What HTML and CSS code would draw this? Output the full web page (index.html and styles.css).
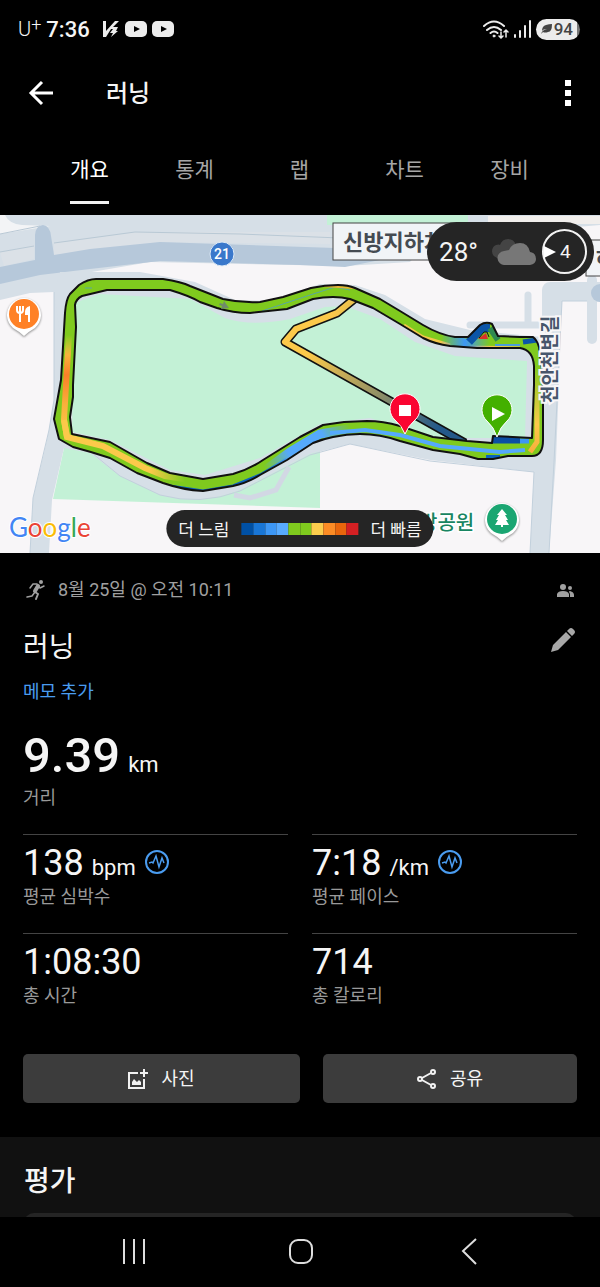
FILE: index.html
```
<!DOCTYPE html>
<html lang="ko">
<head>
    <meta charset="UTF-8">
    <meta name="viewport" content="width=device-width, initial-scale=1.0">
    <title>러닝</title>
    <link rel="stylesheet" href="styles.css">
</head>
<body>
<div class="app">

  <div class="status-bar">
    <div class="status-left">
      <span class="carrier">U<sup>+</sup></span>
      <span class="clock">7:36</span>
      <svg width="18" height="18" viewBox="0 0 18 18" fill="#ececec"><path d="M1 1h3v10L13 1h4l-6 6h5l-2 4h2l-7 6 2-4H8l3-4H9l-5 8H1z"/></svg>
      <svg width="22" height="16" viewBox="0 0 22 16"><rect width="22" height="16" rx="5" fill="#ececec"/><path d="M9 5l6 3-6 3z" fill="#000"/></svg>
      <svg width="22" height="16" viewBox="0 0 22 16"><rect width="22" height="16" rx="5" fill="#ececec"/><path d="M9 5l6 3-6 3z" fill="#000"/></svg>
    </div>
    <div class="status-right">
      <svg width="26" height="20" viewBox="0 0 26 20" fill="none" stroke="#ececec" stroke-width="2" stroke-linecap="round">
        <path d="M1 7q10-9 20 0M4 11q7-6 14 0M7.500 14q3.500-3 7 0"/>
        <circle cx="11" cy="17" r="1" fill="#ececec" stroke-width="1"/>
        <path d="M18 13v6m-2-2l2 2 2-2M23 18v-7m-2 2l2-2 2 2" stroke-width="1.500"/>
      </svg>
      <svg width="17" height="18" viewBox="0 0 17 18" stroke="#ececec" stroke-width="2" stroke-linecap="round"><path d="M1 15v2M6 11v6M11 6v11M16 1v16"/></svg>
      <span class="battery">
        <svg width="11" height="10" viewBox="0 0 11 10"><path d="M0 10Q1 6 6 5 2 5 1 7 1 2 5 1 8 0 11 0 11 8 7 8 4 9 2 8z" fill="#444"/></svg>94
      </span>
    </div>
  </div>

  <header class="top-bar">
    <button class="icon-button" aria-label="뒤로">
      <svg width="26" height="26" viewBox="0 0 26 26" fill="none" stroke="#fff" stroke-width="3"><path d="M25 13H3M14 2L3 13l11 11"/></svg>
    </button>
    <h1>러닝</h1>
    <button class="icon-button more" aria-label="더보기"><i></i><i></i><i></i></button>
  </header>

  <nav class="tabs">
    <a href="#overview" class="active">개요</a>
    <a href="#stats">통계</a>
    <a href="#laps">랩</a>
    <a href="#charts">차트</a>
    <a href="#gear">장비</a>
  </nav>

  <main>
    <div class="map">
      <svg class="map-canvas" viewBox="0 215 600 338" preserveAspectRatio="xMidYMid slice">
        <defs>
          <linearGradient id="spur" gradientUnits="userSpaceOnUse" x1="310" y1="350" x2="440" y2="425">
            <stop offset="0" stop-color="#fcc94a"/><stop offset=".55" stop-color="#8f8f66"/><stop offset="1" stop-color="#24598a"/>
          </linearGradient>
          <linearGradient id="west" gradientUnits="userSpaceOnUse" x1="0" y1="335" x2="0" y2="435">
            <stop offset="0" stop-color="#fcc94a" stop-opacity="0"/><stop offset=".2" stop-color="#f9b13c"/><stop offset=".4" stop-color="#fc7f28"/><stop offset=".7" stop-color="#f9b13c"/><stop offset="1" stop-color="#fcc94a"/>
          </linearGradient>
          <linearGradient id="south" gradientUnits="userSpaceOnUse" x1="150" y1="0" x2="185" y2="0">
            <stop offset="0" stop-color="#fcc94a"/><stop offset="1" stop-color="#fcc94a" stop-opacity="0"/>
          </linearGradient>
          <linearGradient id="east" gradientUnits="userSpaceOnUse" x1="0" y1="365" x2="0" y2="450">
            <stop offset="0" stop-color="#fcc94a" stop-opacity="0"/><stop offset=".7" stop-color="#fcc94a"/><stop offset="1" stop-color="#f9b13c"/>
          </linearGradient>
          <linearGradient id="cool" gradientUnits="userSpaceOnUse" x1="265" y1="470" x2="350" y2="425">
            <stop offset="0" stop-color="#55a9fc" stop-opacity="0"/><stop offset=".3" stop-color="#55a9fc"/><stop offset=".7" stop-color="#55a9fc"/><stop offset="1" stop-color="#55a9fc" stop-opacity="0"/>
          </linearGradient>
          <linearGradient id="north" gradientUnits="userSpaceOnUse" x1="440" y1="0" x2="490" y2="0">
            <stop offset="0" stop-color="#3d97f5" stop-opacity="0"/><stop offset=".5" stop-color="#3d97f5"/><stop offset="1" stop-color="#3d97f5" stop-opacity="0"/>
          </linearGradient>
          <path id="track" d="M61 380L65 313Q66 299 70 294L79 285Q88 279 96 279L163 279Q182 282 190 286L223 299Q241 303 260 302L283 297 311 288Q325 285 338 285 348 285 355 288L380 299 400 311 423 325Q440 335 455 337L468 337 480 325Q486 321 492 324L498 336 520 337 533 337Q537 340 539 347L542 370 543 400 543 440Q543 456 532 456L508 456 493 459 478 459 460 454 433 450 400 441Q380 434 360 434 347 434 333 437 323 439 313 443L287 460 260 475Q247 483 233 486L203 491Q183 490 163 483L137 473 110 458Q92 452 73 447L59 439 54 419z
            M73 385L76 327 75 305Q76 299 82 296L107 290 170 290Q190 296 200 302L217 308Q233 313 250 313L287 309 313 299Q323 297 333 297 342 297 350 299L373 308 400 324 423 338Q435 344 450 346L477 348 520 348Q533 350 534 366L534 385 532 438 493 436 492 443 467 441 433 437 400 426Q383 421 367 421L344 422 323 425 300 437 263 460Q250 469 233 474L203 479 170 473 147 463 110 442 72 434 70 417 73 397z"/>
          <clipPath id="track-clip"><use href="#track" clip-rule="evenodd"/></clipPath>
        </defs>

        <!-- ground, roads and river -->
        <rect y="215" width="600" height="338" fill="#f8f6f8"/>
        <path d="M0 215H600V225L430 240 410 262 345 266 150 262 80 274 58 292H54L30 293 0 300z" fill="#d6dfe7"/>
        <path d="M0 215H5Q9 224 22 225L50 226 0 234z" fill="#f3f4f6"/>
        <path d="M0 252L34 245V259L4 266zM54 243L135 232H330V244L160 242 54 255z" fill="#dbe1e7"/>
        <path d="M0 234L40 226M54 243L135 232 240 234 340 238M0 252L34 246" fill="none" stroke="#b9c9d5"/>
        <path d="M0 267L35 260V235Q36 225 43 225 50 226 51 236L54 255 90 249 160 242 335 248 430 250 345 267 300 265 160 261 90 269 40 275 0 284z" fill="#b6c8da"/>
        <path d="M327 215H468V225H327zM64 448L74 436 100 440 200 470 320 440V508L53 499z" fill="#c3f1d6"/>
        <path d="M468 216h20v15h-20z" fill="#d6dfe7"/>
        <path d="M488 216h112v8H488z" fill="#f1eeec"/>
        <path d="M54 292V400L49 430 44 453 33 498 30 553H49L52 500 64 448 70 440 80 290z" fill="#d6dfe7"/>
        <path d="M542 290Q543 282 550 282H600V301H562L556 460 549 553H530L534 472 430 460 350 444 310 454 240 490Q200 506 160 495L120 476 90 453 64 448 74 432 54 292 60 272 140 272 195 282 235 300 270 301 320 284 355 285 385 295 425 319 470 330 542 337z" fill="#d6dfe7"/>
        <path d="M534 472L430 461 350 444 310 455 240 491Q200 506 160 495L120 476 92 453M30 553L33 498 49 430 54 400V292M530 553L534 472M549 553L554 462 562 301H600" fill="none" stroke="#c2d0dc"/>
        <path d="M470 325H545M528 295V325" fill="none" stroke="#d6dfe7" stroke-width="7" stroke-linecap="round"/>
        <path d="M592 280V339" stroke="#d6dfe7" stroke-width="10" stroke-linecap="round"/>
        <circle cx="600" cy="293" r="9" fill="#b6c8da"/>
        <path d="M234 495L250 498 276 490 289 467" fill="none" stroke="#d2d8e4" stroke-width="5"/>
        <path d="M74 303L100 294 190 299 225 318Q250 327 290 319L325 307 345 306 380 319 415 342 455 356 527 361 525 438 430 438 370 418 320 424 260 458 205 475 170 470 110 440 72 432z" fill="#c3f1d6"/>
        <g class="map-text">
          <rect x="333" y="223" width="150" height="37" fill="#f1f4f7" stroke="#444"/>
          <text x="343" y="250" font-size="22" font-weight="700" fill="#454b52">신방지하차</text>
          <rect x="586" y="240" width="30" height="36" fill="#f1f4f7" stroke="#444"/>
          <text x="596" y="266" font-size="20" font-weight="700" fill="#454b52">하</text>
        </g>
        <circle cx="222" cy="254" r="12" fill="#3a78cb" stroke="#dce9f6"/>
        <text x="222" y="259" font-size="14" font-weight="500" fill="#fff" text-anchor="middle">21</text>

        <!-- shortcut across the park -->
        <path d="M358 296L337 313 296 329 285 342 465 443" fill="none" stroke="#111" stroke-width="9" stroke-linejoin="round"/>
        <path d="M358 296L337 313 296 329 285 342 465 443" fill="none" stroke="url(#spur)" stroke-width="6" stroke-linejoin="round"/>

        <!-- the lap, coloured by pace -->
        <use href="#track" fill="#7fca1e" fill-rule="evenodd"/>
        <g clip-path="url(#track-clip)" fill="none">
          <path d="M69 335L66 385 64 420 67 437" stroke="url(#west)" stroke-width="6"/>
          <path d="M64 420L67 437 103 446 145 468 165 476 190 480" stroke="url(#south)" stroke-width="6"/>
          <path d="M163 485L203 491 233 486 260 475 287 459" stroke="#0b63bd" stroke-width="3"/>
          <path d="M260 474L290 452 320 434 360 427" stroke="url(#cool)" stroke-width="9"/>
          <path d="M330 433L365 430 400 435 440 446 500 452 525 450" stroke="#55a9fc" stroke-width="4"/>
          <path d="M262 311L310 295 335 287 350 290M85 288h7" stroke="#5aa7a0" stroke-width="1"/>
          <path d="M323 286L355 288M373 295L382 300" stroke="#e8b337" stroke-width="2"/>
          <path d="M404 325L423 337 450 345M470 347L520 348" stroke="#f3c64a" stroke-width="3"/>
          <path d="M442 339L467 344 490 343" stroke="url(#north)" stroke-width="10"/>
          <path d="M469 342L482 328H490" stroke="#0b55a8" stroke-width="8"/>
          <path d="M490 328L498 340" stroke="#2f8a50" stroke-width="6"/>
          <path d="M495 345H520" stroke="#4a9cda" stroke-width="2"/>
          <path d="M523 342L537 340" stroke="#0b55a8" stroke-width="5"/>
          <path d="M537 365V442L530 452" stroke="url(#east)" stroke-width="5"/>
          <path d="M493 440H520" stroke="#0b4fa3" stroke-width="7"/>
          <path d="M520 441H529" stroke="#3d97f5" stroke-width="5"/>
          <path d="M486 457H500" stroke="#0b63bd" stroke-width="4"/>
        </g>
        <path d="M478 339L486 333 488 339z" fill="#d9312a"/>
        <path d="M479 338L484 332H487L489 337" fill="none" stroke="#111"/>
        <use href="#track" class="track-line"/>
        <path d="M220 303l3 1 1-3 5 7-8 1 1-3-3-1z" fill="#6f8b69"/>

        <text class="map-text street" transform="translate(557 403) rotate(-90)" font-size="19" font-weight="700">천안천변길</text>

        <!-- start and finish -->
        <path d="M497 437Q494 427 487 421A15 15 0 1 1 507 421Q500 427 497 437z" fill="#43b000" stroke="#fff"/>
        <path d="M492 407l13 7-13 7z" fill="#fff"/>
        <path d="M405 434Q402 426 395 420A15 15 0 1 1 415 420Q408 426 405 434z" fill="#fa0531" stroke="#fff"/>
        <path d="M399 405h12v11h-12z" fill="#fff"/>

        <!-- places -->
        <g class="place">
          <path d="M24 336Q20 332 13 328A17 17 0 1 1 35 328Q28 332 24 336z" fill="#fff"/>
          <circle cx="24" cy="314" r="15" fill="#ff8126"/>
          <path d="M17 306v4q0 3 3 3t3-3v-4M20 306v16" fill="none" stroke="#fff" stroke-width="2"/>
          <path d="M30 306v16h-2v-7h-3q-1-8 5-9z" fill="#fff"/>
        </g>
        <text class="map-text park" x="419" y="530" font-size="20" font-weight="500">방공원</text>
        <g class="place">
          <path d="M502 541Q498 537 491 533A17 17 0 1 1 513 533Q506 537 502 541z" fill="#fff"/>
          <circle cx="502" cy="519" r="15" fill="#1ba672"/>
          <path d="M502 509l5 6h-2l3 5h-2l3 5h-6v2h-2v-2h-6l3-5h-2l3-5h-2z" fill="#fff"/>
        </g>
        <text class="google" x="9" y="537"><tspan fill="#4285f4">G</tspan><tspan fill="#ea4335">o</tspan><tspan fill="#fbbc05">o</tspan><tspan fill="#4285f4">g</tspan><tspan fill="#34a853">l</tspan><tspan fill="#ea4335">e</tspan></text>
      </svg>

      <div class="weather">
        <span>28°</span>
        <svg width="46" height="26" viewBox="0 0 46 26">
          <path d="M7 19a7 7 0 0 1-1-13Q9 5 10 6 12 0 18 0q6 0 8 6l-6 13z" fill="#444"/>
          <path d="M15 26a7 7 0 0 1-1-14l5-1q3-7 11-7 8 0 10 9 6 1 6 7 0 5-6 6z" fill="#777"/>
        </svg>
        <div class="wind"><svg width="12" height="12" viewBox="0 0 12 12"><path d="M0 0l12 6-12 6z" fill="#fff"/></svg>4</div>
      </div>

      <div class="legend">
        <span>더 느림</span>
        <div class="scale"><i class="c1"></i><i class="c2"></i><i class="c3"></i><i class="c4"></i><i class="c5"></i><i class="c5"></i><i class="c6"></i><i class="c7"></i><i class="c8"></i><i class="c9"></i></div>
        <span>더 빠름</span>
      </div>
    </div>

    <section class="activity" id="overview">
      <div class="meta">
        <svg width="20" height="20" viewBox="0 0 20 20" fill="none" stroke="#a0a0a0" stroke-width="2" stroke-linecap="round" stroke-linejoin="round">
          <circle cx="15" cy="2" r="2" fill="#a0a0a0" stroke="none"/>
          <path d="M4 8l3-4h4l3 4 4-2M1 17l5-1 3-4" stroke-width="1.500"/>
          <path d="M12 6L9 11" stroke-width="4"/>
          <path d="M9 12l3 2-2 5"/>
        </svg>
        <span>8월 25일 @ 오전 10:11</span>
        <svg class="people" width="17" height="13" viewBox="0 0 17 13" fill="#a0a0a0">
          <circle cx="6" cy="3" r="3"/><path d="M0 13v-3q1-3 6-3t6 3v3z"/><circle cx="13" cy="4" r="2"/><path d="M13 13h4v-2q0-3-4-4-1 0-1 1 1 1 1 3z"/>
        </svg>
      </div>
      <div class="title-row">
        <h2>러닝</h2>
        <button class="edit" aria-label="편집">
          <svg width="24" height="24" viewBox="0 0 24 24" fill="#a8a8a8"><path d="M0 24l2-7L15 4l5 5L7 22zM16 3l2-2q2-2 4 0l1 1q2 2 0 4l-2 2z"/></svg>
        </button>
      </div>
      <a href="#note" class="note">메모 추가</a>

      <div class="distance">
        <p class="value"><b>9.39</b> km</p>
        <p class="label">거리</p>
      </div>

      <div class="stats">
        <div class="stat">
          <p class="value"><b>138</b> bpm
            <svg width="26" height="26" viewBox="0 0 26 26" fill="none" stroke="#4a9cf0" stroke-width="2"><circle cx="13" cy="13" r="11"/><path d="M5 14l3-1 1 1 3-7 3 11 3-9 2 5" stroke-width="1.500"/></svg>
          </p>
          <p class="label">평균 심박수</p>
        </div>
        <div class="stat">
          <p class="value"><b>7:18</b> /km
            <svg width="26" height="26" viewBox="0 0 26 26" fill="none" stroke="#4a9cf0" stroke-width="2"><circle cx="13" cy="13" r="11"/><path d="M5 14l3-1 1 1 3-7 3 11 3-9 2 5" stroke-width="1.500"/></svg>
          </p>
          <p class="label">평균 페이스</p>
        </div>
        <div class="stat">
          <p class="value"><b>1:08:30</b></p>
          <p class="label">총 시간</p>
        </div>
        <div class="stat">
          <p class="value"><b>714</b></p>
          <p class="label">총 칼로리</p>
        </div>
      </div>

      <div class="actions">
        <button class="photo">
          <svg width="20" height="20" viewBox="0 0 20 20" fill="none" stroke="#f2f2f2" stroke-width="2"><path d="M10 4H1v15h15v-9M16 0v8M12 4h8"/><path d="M4 16v-3l2-3 3 3 2-2 2 2v3z" fill="#f2f2f2" stroke="none"/></svg>
          사진
        </button>
        <button class="share">
          <svg width="20" height="22" viewBox="0 0 20 22" fill="none" stroke="#f2f2f2" stroke-width="2"><circle cx="3" cy="11" r="2"/><circle cx="16" cy="4" r="2"/><circle cx="16" cy="18" r="2"/><path d="M5 10l9-5M5 12l9 5"/></svg>
          공유
        </button>
      </div>
    </section>

    <section class="rating">
      <h2>평가</h2>
      <div class="card"></div>
    </section>
  </main>

  <div class="nav-bar">
    <button aria-label="최근 앱"><svg width="24" height="28" viewBox="0 0 24 28" stroke="#ddd" stroke-width="2"><path d="M2 1v25M12 1v25M22 1v25"/></svg></button>
    <button aria-label="홈"><svg width="26" height="28" viewBox="0 0 26 28" fill="none" stroke="#ddd" stroke-width="2"><rect x="2" y="2" width="22" height="23" rx="8"/></svg></button>
    <button aria-label="뒤로"><svg width="26" height="28" viewBox="0 0 26 28" fill="none" stroke="#ddd" stroke-width="2"><path d="M20 1L7 13l13 13"/></svg></button>
  </div>

</div>
</body>
</html>
```
FILE: styles.css
```
* {
    box-sizing: border-box;
}
body {
    margin: 0;
    background-color: #000;
    color: #f5f5f5;
    font-family: Roboto, "Noto Sans CJK KR", sans-serif;
}
h1, h2, p {
    margin: 0;
}
button {
    font-family: inherit;
    color: inherit;
    background: none;
    border: 0;
    padding: 0;
}
svg {
    flex: none;
}
.app {
    height: 100vh;
    display: flex;
    flex-direction: column;
}

/* phone status bar */
.status-bar {
    height: 58px;
    padding: 0 20px 0 18px;
    display: flex;
    align-items: center;
    justify-content: space-between;
    flex: none;
}
.status-left, .status-right {
    display: flex;
    align-items: center;
    gap: 5px;
}
.carrier {
    font-size: 20px;
    font-weight: 300;
    line-height: 24px;
}
.carrier sup {
    font-size: 18px;
    line-height: 0;
    vertical-align: 5px;
}
.clock {
    font-size: 22px;
    font-weight: 500;
    margin-right: 7px;
}
.battery {
    display: flex;
    align-items: center;
    gap: 2px;
    height: 21px;
    padding: 0 7px 0 5px;
    border-radius: 11px;
    background: linear-gradient(90deg, #ececec 94%, #777 94%);
    color: #444;
    font-size: 17px;
    font-weight: 500;
}

.top-bar {
    height: 70px;
    padding: 0 29px 0 28px;
    display: flex;
    align-items: center;
    flex: none;
}
.top-bar h1 {
    flex: 1;
    margin-left: 52px;
    padding-top: 2px;
    font-size: 24px;
    font-weight: 500;
    line-height: 32px;
}
.icon-button {
    display: flex;
}
.more {
    flex-direction: column;
    gap: 4px;
}
.more i {
    width: 6px;
    height: 6px;
    background-color: #fff;
}

.tabs {
    height: 87px;
    padding: 21px 38px 11px 37px;
    display: grid;
    grid-template-columns: repeat(5, 1fr);
    justify-items: center;
    flex: none;
}
.tabs a {
    color: #a6a6a6;
    font-size: 21px;
    line-height: 42px;
    text-decoration: none;
    border-bottom: 3px solid transparent;
}
.tabs a.active {
    color: #fff;
    border-color: #f2f2f2;
}

main {
    flex: 1;
    min-height: 0;
    overflow-y: auto;
    scrollbar-width: none;
}

/* map */
.map {
    position: relative;
    height: 338px;
}
.map-canvas {
    display: block;
    width: 100%;
    height: 100%;
}
.map-text {
    font-family: "Noto Sans CJK KR", sans-serif;
}
.track-line {
    fill: none;
    stroke: #111;
    stroke-width: 2px;
    stroke-linejoin: round;
}
.street {
    fill: #47566b;
    stroke: #f8f6f8;
    stroke-width: 4px;
    paint-order: stroke;
}
.park {
    fill: #188562;
    stroke: #fff;
    stroke-width: 3px;
    paint-order: stroke;
}
.place {
    filter: drop-shadow(0 1px 1px #888);
}
.google {
    font-family: Lato, sans-serif;
    font-size: 26px;
    stroke: #fff;
    stroke-width: 2px;
    paint-order: stroke;
}
.weather {
    position: absolute;
    top: 7px;
    right: 6px;
    height: 59px;
    padding: 0 7px 0 12px;
    border-radius: 30px;
    background-color: #252525;
    display: flex;
    align-items: center;
    gap: 12px;
    font-size: 26px;
}
.weather svg {
    display: block;
}
.wind {
    width: 45px;
    height: 45px;
    margin-left: -6px;
    border: 2px solid #f2f2f2;
    border-radius: 50%;
    display: flex;
    align-items: center;
    gap: 4px;
    font-size: 19px;
}
.legend {
    position: absolute;
    left: 50%;
    bottom: 6px;
    transform: translateX(-50%);
    height: 37px;
    padding: 0 12px;
    border-radius: 19px;
    background-color: #252525;
    display: flex;
    align-items: center;
    gap: 12px;
    font-size: 17px;
    white-space: nowrap;
}
.scale {
    display: grid;
    grid-template-columns: repeat(10, 1fr);
    width: 117px;
    height: 12px;
}
.c1 { background-color: #0050a4; }
.c2 { background-color: #1976d6; }
.c3 { background-color: #3d97f5; }
.c4 { background-color: #58abff; }
.c5 { background-color: #7fca1e; }
.c6 { background-color: #fccd4d; }
.c7 { background-color: #fc8c25; }
.c8 { background-color: #e9660c; }
.c9 { background-color: #d52023; }

/* summary */
.activity {
    padding: 23px 23px 34px;
}
.meta {
    display: flex;
    align-items: center;
    gap: 12px;
    padding-left: 3px;
    color: #a0a0a0;
    font-size: 18px;
    line-height: 28px;
}
.people {
    margin: 0 3px 0 auto;
}
.title-row {
    display: flex;
    justify-content: space-between;
    margin-top: 24px;
}
h2 {
    font-size: 28px;
    font-weight: 400;
    line-height: 40px;
}
.edit {
    height: 24px;
    margin: 0 2px 0 0;
}
.note {
    display: inline-block;
    margin-top: 11px;
    color: #4a9cf0;
    font-size: 18px;
    line-height: 26px;
    text-decoration: none;
}
.value {
    display: flex;
    align-items: baseline;
    gap: 8px;
    height: 44px;
    font-size: 22px;
    line-height: 44px;
}
.value b {
    font-size: 36px;
    font-weight: 400;
}
.value svg {
    align-self: center;
    margin-bottom: 2px;
}
.distance {
    height: 129px;
    padding-top: 22px;
}
.distance .value {
    height: 59px;
    line-height: 58px;
}
.distance b {
    font-size: 49px;
    font-weight: 500;
}
.label {
    color: #999;
    font-size: 18px;
    line-height: 24px;
}
.stats {
    display: grid;
    grid-template-columns: 1fr 1fr;
    column-gap: 24px;
}
.stat {
    height: 99px;
    padding-top: 6px;
    border-top: 1px solid #444;
}
.actions {
    display: flex;
    gap: 23px;
    margin-top: 22px;
}
.actions button {
    display: flex;
    align-items: center;
    justify-content: center;
    gap: 13px;
    height: 49px;
    border-radius: 5px;
    background-color: #3c3c3c;
    font-size: 18px;
    line-height: 24px;
}
.photo {
    flex: 12;
}
.share {
    flex: 11;
}

.rating {
    padding: 25px 24px;
    background-color: #111;
}
.rating h2 {
    font-weight: 500;
}
.card {
    height: 120px;
    margin-top: 11px;
    border-radius: 10px;
    background-color: #252525;
}

/* system buttons */
.nav-bar {
    height: 70px;
    padding: 0 47px 0 50px;
    display: grid;
    grid-template-columns: repeat(3, 1fr);
    place-items: center;
    flex: none;
}
.nav-bar svg {
    display: block;
}
```
